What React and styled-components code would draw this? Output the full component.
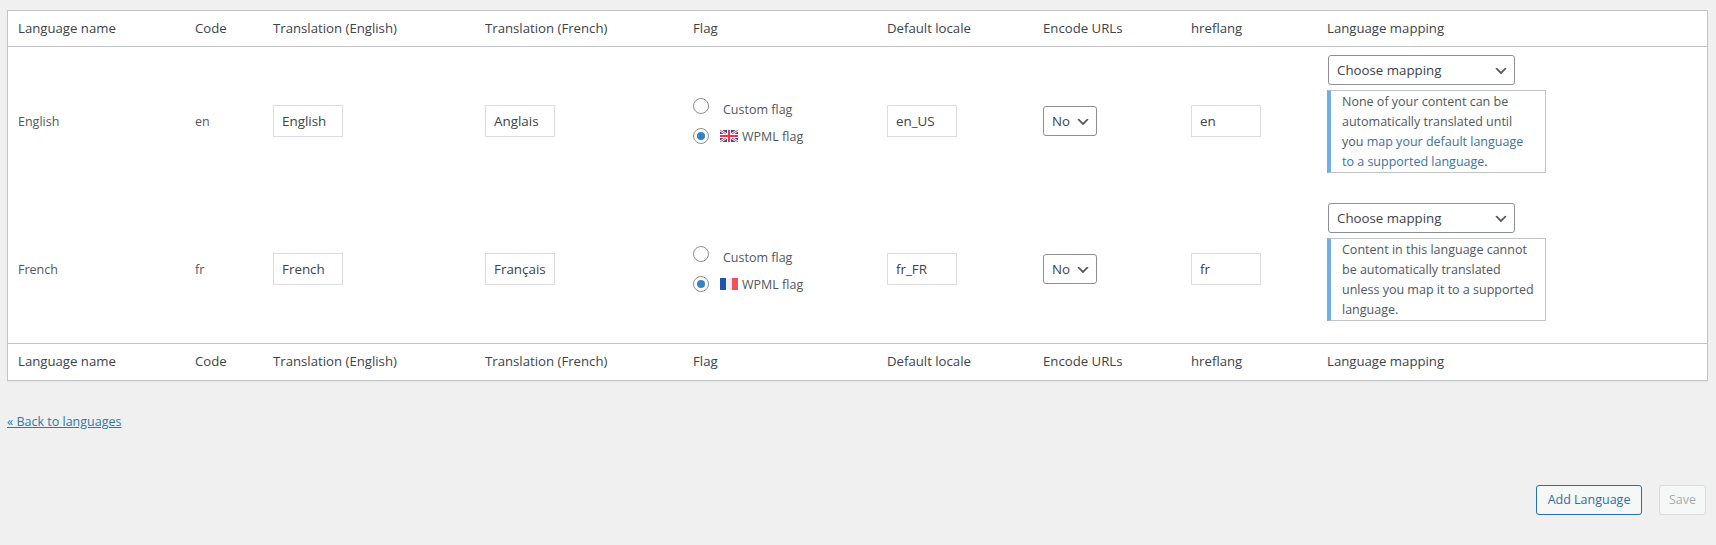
import React from "react";
import styled, { createGlobalStyle } from "styled-components";

const Global = createGlobalStyle`
  html, body { margin: 0; padding: 0; background: #f0f0f1; }
  body { min-height: 100vh; font-family: "Open Sans", "Noto Sans", sans-serif; font-size: 13px; color: #50575e; }
`;

const chevron = `url("data:image/svg+xml;charset=US-ASCII,%3Csvg%20width%3D%2220%22%20height%3D%2220%22%20xmlns%3D%22http%3A%2F%2Fwww.w3.org%2F2000%2Fsvg%22%3E%3Cpath%20d%3D%22M5%206l5%205%205-5%202%201-7%207-7-7%202-1z%22%20fill%3D%22%23555%22%2F%3E%3C%2Fsvg%3E")`;

const Page = styled.div`
  padding: 10px 8px 30px 7px;
  display: flex;
  flex-direction: column;
`;
const Table = styled.table`
  width: 1701px;
  table-layout: fixed;
  border-collapse: separate;
  border-spacing: 0;
  background: #fff;
  border: 1px solid #c3c4c7;
  box-shadow: 0 1px 1px rgba(0,0,0,.04);
`;
const HeadCell = styled.th`
  font-weight: 400;
  font-size: 13.2px;
  line-height: 19px;
  color: #3c434a;
  text-align: left;
  padding: 8px 10px ${p => (p.$foot ? "9px" : "8px")};
  border-bottom: ${p => (p.$foot ? "0" : "1px solid #c3c4c7")};
  border-top: ${p => (p.$foot ? "1px solid #c3c4c7" : "0")};
`;
const Cell = styled.td`
  padding: 8px 10px;
  font-size: 12.5px;
  line-height: 19px;
  vertical-align: middle;
  color: #50575e;
`;
const TextInput = styled.input`
  box-sizing: border-box;
  display: block;
  width: 70px;
  height: 32px;
  padding: 0 8px;
  border: 1px solid #dcdcde;
  border-radius: 0;
  background: #fff;
  color: #3c434a;
  font: 13.4px/30px "Open Sans", sans-serif;
  outline: none;
`;
const Select = styled.select`
  box-sizing: border-box;
  display: block;
  appearance: none;
  width: ${p => p.$w}px;
  height: 30px;
  margin-left: ${p => p.$indent || 0}px;
  padding: 0 24px 0 8px;
  border: 1px solid #8c8f94;
  border-radius: 3px;
  color: #3c434a;
  font: 13.3px/28px "Open Sans", sans-serif;
  background: #fff ${chevron} no-repeat right 5px top 55%;
  background-size: 16px 16px;
`;
const FlagChoices = styled.div`
  display: flex;
  flex-direction: column;
  gap: 14px;
`;
const Choice = styled.label`
  display: flex;
  align-items: ${p => (p.$top ? "flex-start" : "center")};
  height: 16px;
`;
const Radio = styled.input.attrs({ type: "radio" })`
  appearance: none;
  box-sizing: border-box;
  width: 16px;
  height: 16px;
  margin: 0;
  flex: none;
  border: 1px solid #8c8f94;
  border-radius: 50%;
  background: #fff;
  position: relative;
  &:checked::before {
    content: "";
    position: absolute;
    left: 3px;
    top: 3px;
    width: 8px;
    height: 8px;
    border-radius: 50%;
    background: #3582c4;
  }
`;
const CustomText = styled.span`
  margin: 2px 0 0 14px;
`;
const FlagIcon = styled.svg`
  width: 18px;
  height: 12px;
  margin: 0 4px 0 11px;
  flex: none;
`;
const Notice = styled.div`
  box-sizing: border-box;
  width: 219px;
  margin: 5px 0 14px;
  padding: 1px 11px 0 11px;
  background: #fff;
  border: 1px solid #c3c4c7;
  border-left: 4px solid #72aee6;
  font-size: 12.5px;
  line-height: 20px;
  color: #50575e;
`;
const NoticeLink = styled.a`
  color: #3c739c;
  text-decoration: none;
`;
const BackRow = styled.div`
  margin-top: 31px;
  line-height: 19px;
`;
const BackLink = styled.a`
  color: #2f78ab;
  text-decoration: underline;
  font-size: 12.5px;
`;
const Actions = styled.div`
  display: flex;
  justify-content: flex-end;
  gap: 17px;
  margin-top: 54px;
  width: 1699px;
`;
const Button = styled.button`
  box-sizing: border-box;
  height: 30px;
  padding: 0 ${p => (p.disabled ? 9 : 10.5)}px;
  border-radius: 3px;
  font: 12.5px/28px "Open Sans", sans-serif;
  border: 1px solid ${p => (p.disabled ? "#dcdcde" : "#2271b1")};
  color: ${p => (p.disabled ? "#a7aaad" : "#2f6f9f")};
  background: #f6f7f7;
`;

const UkFlag = () => (
  <FlagIcon viewBox="0 0 18 12">
    <rect width="18" height="12" fill="#3f4d8f" />
    <path d="M0 0l18 12M18 0L0 12" stroke="#fff" strokeWidth="2.4" />
    <path d="M0 0l18 12M18 0L0 12" stroke="#e8384f" strokeWidth=".9" />
    <path d="M9 0v12M0 6h18" stroke="#fff" strokeWidth="4" />
    <path d="M9 0v12M0 6h18" stroke="#e8384f" strokeWidth="2.2" />
  </FlagIcon>
);
const FrFlag = () => (
  <FlagIcon viewBox="0 0 18 12">
    <rect width="6" height="12" fill="#1f55a8" />
    <rect x="6" width="6" height="12" fill="#eef0f3" />
    <rect x="12" width="6" height="12" fill="#f4505a" />
  </FlagIcon>
);

const columns = [
  ["Language name", 177], ["Code", 78], ["Translation (English)", 212], ["Translation (French)", 208],
  ["Flag", 194], ["Default locale", 156], ["Encode URLs", 148], ["hreflang", 136], ["Language mapping", 390],
];

const rows = [
  {
    name: "English", code: "en", tEn: "English", tFr: "Anglais", locale: "en_US", flag: <UkFlag />,
    notice: <>None of your content can be automatically translated until you <NoticeLink href="#">map your default language to a supported language</NoticeLink>.</>,
  },
  {
    name: "French", code: "fr", tEn: "French", tFr: "Français", locale: "fr_FR", flag: <FrFlag />,
    notice: <>Content in this language cannot be automatically translated unless you map it to a supported language.</>,
  },
];

export default function App() {
  return (
    <Page>
      <Global />
      <Table>
        <colgroup>{columns.map(([n, w]) => <col key={n} style={{ width: w }} />)}</colgroup>
        <thead>
          <tr>{columns.map(([n]) => <HeadCell key={n}>{n}</HeadCell>)}</tr>
        </thead>
        <tbody>
          {rows.map(r => (
            <tr key={r.code}>
              <Cell>{r.name}</Cell>
              <Cell>{r.code}</Cell>
              <Cell><TextInput defaultValue={r.tEn} /></Cell>
              <Cell><TextInput defaultValue={r.tFr} /></Cell>
              <Cell>
                <FlagChoices>
                  <Choice $top><Radio name={`flag-${r.code}`} /><CustomText>Custom flag</CustomText></Choice>
                  <Choice><Radio name={`flag-${r.code}`} defaultChecked />{r.flag}<span>WPML flag</span></Choice>
                </FlagChoices>
              </Cell>
              <Cell><TextInput defaultValue={r.locale} /></Cell>
              <Cell><Select $w={54}><option>No</option><option>Yes</option></Select></Cell>
              <Cell><TextInput defaultValue={r.code} /></Cell>
              <Cell>
                <Select $w={187} $indent={1}><option>Choose mapping</option></Select>
                <Notice>{r.notice}</Notice>
              </Cell>
            </tr>
          ))}
        </tbody>
        <tfoot>
          <tr>{columns.map(([n]) => <HeadCell key={n} $foot>{n}</HeadCell>)}</tr>
        </tfoot>
      </Table>
      <BackRow><BackLink href="#">« Back to languages</BackLink></BackRow>
      <Actions>
        <Button>Add Language</Button>
        <Button disabled>Save</Button>
      </Actions>
    </Page>
  );
}
